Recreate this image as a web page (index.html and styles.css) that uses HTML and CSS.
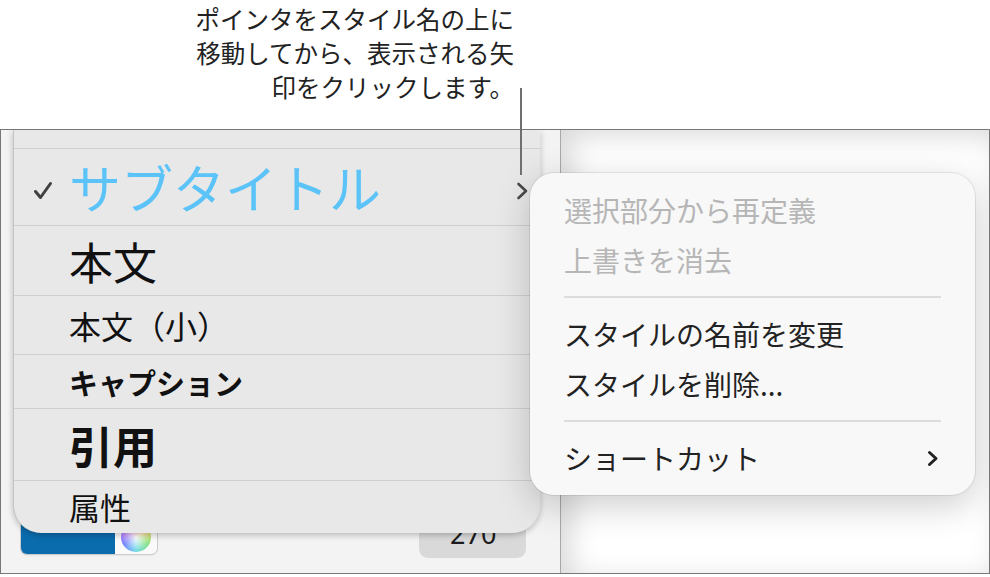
FILE: index.html
```html
<!DOCTYPE html>
<html>
<head>
  <title>スタイルメニュー</title>
  <link rel="stylesheet" href="styles.css">
</head>
<body>
  <div class="page">
    <header class="note">
      <p class="note-text">ポインタをスタイル名の上に<br>移動してから、表示される矢<br>印をクリックします。</p>
    </header>
    <span class="leader"></span>

    <div class="frame">
      <aside class="sidebar">
        <div class="controls">
          <div class="well">
            <span class="well-color"></span>
            <span class="well-picker"><span class="wheel"></span></span>
          </div>
          <div class="angle">270°</div>
        </div>
      </aside>
      <main class="canvas"></main>

      <!-- paragraph style list (popover) -->
      <ul class="styles">
        <li class="row row-cut"></li>
        <li class="row row-sub">
          <span class="mark">
            <svg width="20" height="19" viewBox="0 0 20 19"><path d="M2.5 10.5 L7.5 16.5 L17.5 2.5" fill="none" stroke="#404040" stroke-width="3" stroke-linecap="round" stroke-linejoin="round"/></svg>
          </span>
          <span class="name name-sub">サブタイトル</span>
          <svg class="more" width="13" height="20" viewBox="0 0 13 20"><path d="M2.5 3 L10 10 L2.5 17" fill="none" stroke="#4a4a4a" stroke-width="2.6" stroke-linecap="round" stroke-linejoin="round"/></svg>
        </li>
        <li class="row row-body"><span class="mark"></span><span class="name name-body">本文</span></li>
        <li class="row row-small"><span class="mark"></span><span class="name name-small">本文（小）</span></li>
        <li class="row row-caption"><span class="mark"></span><span class="name name-caption">キャプション</span></li>
        <li class="row row-quote"><span class="mark"></span><span class="name name-quote">引用</span></li>
        <li class="row row-attr"><span class="mark"></span><span class="name name-attr">属性</span></li>
      </ul>

      <!-- context menu for the style -->
      <div class="menu">
        <div class="menu-item disabled">選択部分から再定義</div>
        <div class="menu-item disabled">上書きを消去</div>
        <div class="menu-sep"></div>
        <div class="menu-item">スタイルの名前を変更</div>
        <div class="menu-item">スタイルを削除...</div>
        <div class="menu-sep"></div>
        <div class="menu-item">
          ショートカット
          <svg class="menu-arrow" width="12" height="17" viewBox="0 0 12 17"><path d="M2.5 2.5 L9 8.5 L2.5 14.5" fill="none" stroke="#222" stroke-width="3" stroke-linecap="round" stroke-linejoin="round"/></svg>
        </div>
      </div>
    </div>
  </div>
</body>
</html>
```

FILE: styles.css
```css
body {
  margin: 0;
  background: #fff;
  font-family: "Noto Sans CJK JP", "Noto Sans", sans-serif;
  color: #1a1a1a;
}
.page {
  position: relative;
  width: 990px;
  height: 577px;
  overflow: hidden;
}
.note {
  height: 129px;
  display: flex;
  justify-content: flex-end;
  padding-right: 476px;
  box-sizing: border-box;
}
.note-text {
  margin: 2px 0 0;
  font-size: 24.5px;
  line-height: 34px;
  text-align: right;
  color: #222;
  white-space: nowrap;
}
.leader {
  position: absolute;
  left: 520px;
  top: 88px;
  width: 2px;
  height: 87px;
  background: #6f6f6f;
  z-index: 5;
}
.frame {
  position: relative;
  display: flex;
  height: 445px;
  border: 1px solid #777;
  box-sizing: border-box;
  overflow: hidden;
}
.sidebar {
  width: 560px;
  flex: none;
  box-sizing: border-box;
  border-right: 1px solid #a8a8a8;
  background: #f3f3f3;
  display: flex;
  flex-direction: column;
  justify-content: flex-end;
}
.controls {
  display: flex;
  justify-content: space-between;
  align-items: flex-end;
  padding: 0 34px 15px 20px;
}
.well {
  display: flex;
  width: 136px;
  height: 42px;
  margin-bottom: 4px;
  border-radius: 6px;
  overflow: hidden;
  box-shadow: 0 0 0 1px #cdcdcd, 0 1px 2px rgba(0, 0, 0, 0.15);
}
.well-color {
  width: 94px;
  background: #0b6cad;
}
.well-picker {
  flex: 1;
  background: #fafafa;
  display: flex;
  justify-content: center;
  align-items: flex-end;
  padding-bottom: 2px;
}
.wheel {
  width: 30px;
  height: 30px;
  border-radius: 50%;
  background: radial-gradient(circle, #fff 0, rgba(255, 255, 255, 0) 70%),
    conic-gradient(#ff7a7a, #ffd96a, #7ee07a, #6ad8e8, #6a7cff, #d67aff, #ff7a7a);
}
.angle {
  width: 107px;
  height: 44px;
  box-sizing: border-box;
  border-radius: 9px;
  background: #d9d9d9;
  font-family: "Noto Sans", sans-serif;
  font-size: 27px;
  line-height: 40px;
  text-align: right;
  padding-right: 18px;
  color: #1c1c1c;
}
.canvas {
  flex: 1;
  background: #fff;
  box-shadow: inset 10px 6px 28px rgba(0, 0, 0, 0.15);
}

/* style list */
.styles {
  position: absolute;
  left: 12px;
  top: 0;
  width: 527px;
  margin: 0;
  padding: 0;
  list-style: none;
  background: #e8e8e8;
  border-left: 1px solid #c4c4c4;
  border-radius: 0 0 28px 28px;
  box-shadow: 0 2px 6px rgba(0, 0, 0, 0.25), 1px 0 0 #fafafa;
  box-sizing: border-box;
  z-index: 2;
}
.row {
  display: flex;
  align-items: center;
  box-sizing: border-box;
  border-bottom: 1px solid #d0d0d0;
}
.row-cut { height: 19px; }
.row-sub { height: 77px; }
.row-body { height: 70px; }
.row-small { height: 59px; }
.row-caption { height: 54px; }
.row-quote { height: 72px; }
.row-attr { height: 52px; border-bottom: none; }
.mark {
  width: 55px;
  flex: none;
  display: flex;
  padding-left: 19px;
  box-sizing: border-box;
  margin-top: 6px;
}
.name {
  color: #111;
  white-space: nowrap;
}
.name-sub {
  font-size: 52px;
  color: #5bc3f7;
  line-height: 60px;
}
.name-body {
  font-size: 44px;
  line-height: 52px;
}
.name-small {
  font-size: 32px;
  line-height: 40px;
}
.name-caption {
  font-size: 29px;
  font-weight: 700;
  line-height: 36px;
}
.name-quote {
  font-size: 44px;
  font-weight: 700;
  line-height: 52px;
}
.name-attr {
  font-size: 31px;
  line-height: 40px;
}
.more {
  margin-left: auto;
  margin-right: 11px;
  margin-top: 8px;
}

/* context menu */
.menu {
  position: absolute;
  left: 529px;
  top: 43px;
  width: 445px;
  height: 322px;
  box-sizing: border-box;
  padding: 12px 0;
  background: #f8f8f8;
  border-radius: 24px;
  box-shadow: 0 0 0 1px rgba(0, 0, 0, 0.08), 0 10px 36px rgba(0, 0, 0, 0.2);
  z-index: 3;
}
.menu-item {
  height: 50px;
  display: flex;
  align-items: center;
  padding: 0 36px 0 34px;
  font-size: 28px;
  color: #222;
  white-space: nowrap;
}
.menu-item.disabled {
  color: #b6b6b6;
}
.menu-sep {
  height: 24px;
  margin: 0 34px;
  background: linear-gradient(#dcdcdc, #dcdcdc) center / 100% 2px no-repeat;
}
.menu-arrow {
  margin-left: auto;
}
```
